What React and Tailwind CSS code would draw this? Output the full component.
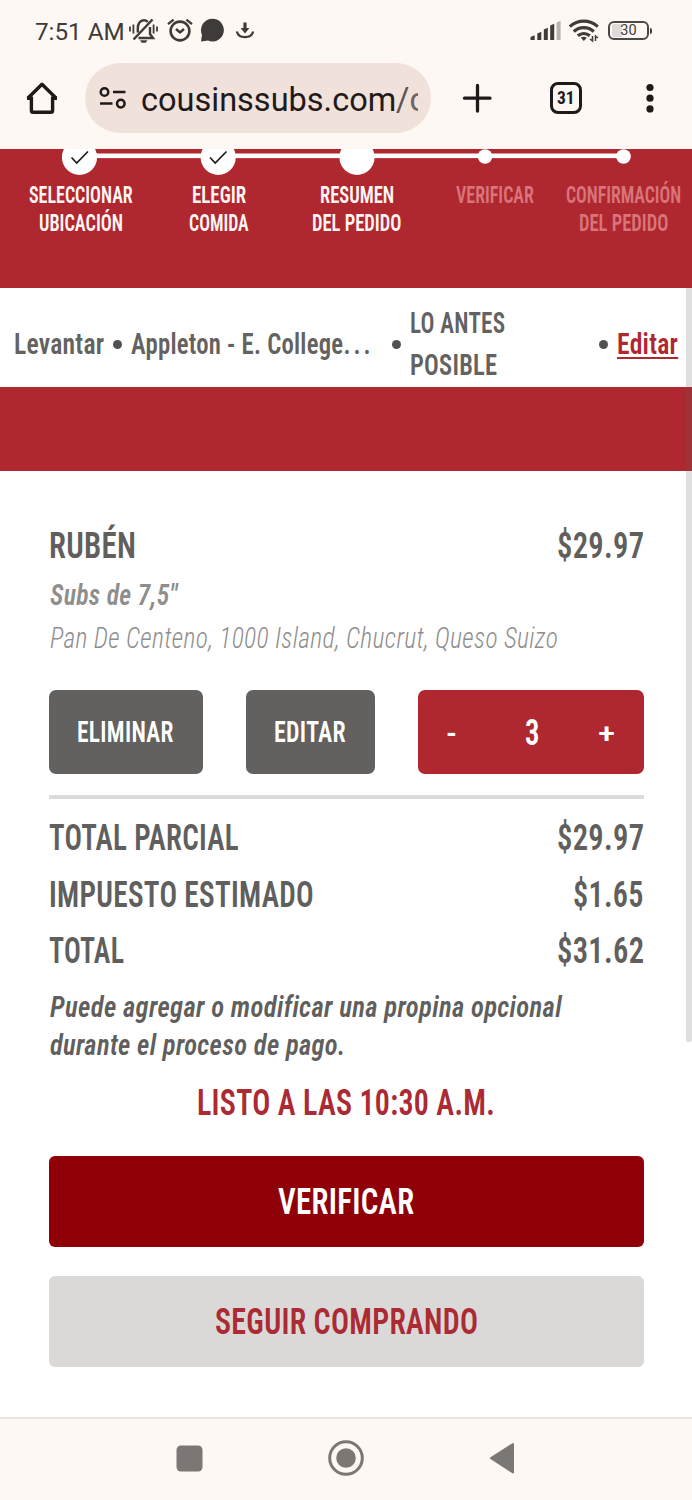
import { useLayoutEffect, useRef, useState } from "react";

/* Single-line text condensed horizontally until it fills its box. */
function Fit({ className = "", inner = "", children }) {
  const box = useRef(null);
  const text = useRef(null);
  const [scale, setScale] = useState(1);
  useLayoutEffect(() => {
    const natural = text.current.offsetWidth;
    if (natural) setScale(box.current.getBoundingClientRect().width / natural);
  }, [children]);
  return (
    <span ref={box} className={`block shrink-0 whitespace-nowrap ${className}`}>
      <span
        ref={text}
        className={`inline-block origin-left ${inner}`}
        style={{ transform: `scaleX(${scale})` }}
      >
        {children}
      </span>
    </span>
  );
}

function StatusBar() {
  return (
    <div className="flex h-[62px] items-start text-[#3f3b3a]">
      <Fit className="ml-[35px] mt-[17px] w-[90px] font-[Roboto] text-[24.500px] leading-[30px]">7:51 AM</Fit>
      <svg className="ml-[3px] mt-[17px] h-[27px] w-[32px]" viewBox="128 17 32 27" fill="none" stroke="currentColor" strokeWidth="2.400">
        <path d="M130 26.500v5M133.400 24.500v9M153.600 24.500v9M157 26.500v5" strokeWidth="1.800" />
        <path d="M137.800 32.500V28c0-4.200 2.400-7.700 6-7.700 1.600 0 3 .5 4 1.500M150 27v7l3 4h-14.500" />
        <path d="M133.500 39.500 152.500 19.500" strokeWidth="2.500" />
        <path d="M140 40.200h7.500l-1.800 2.500h-4z" fill="currentColor" stroke="none" />
      </svg>
      <svg className="ml-[7px] mt-[17px] h-[27px] w-[26px]" viewBox="167 17 26 27" fill="none" stroke="currentColor" strokeWidth="2.600">
        <circle cx="180" cy="31" r="9.400" />
        <path d="M176 29 180 32.400l4-3.400" />
        <path d="M168 24.200 173.600 19.600M186.400 19.600l5.600 4.600" strokeWidth="2.300" />
      </svg>
      <svg className="ml-[7px] mt-[17px] h-[27px] w-[26px]" viewBox="200 17 26 27" fill="currentColor">
        <path d="M212.600 18.700a11.400 11.400 0 1 1-4.600 21.900L201 41.600l1-6.800a11.400 11.400 0 0 1 10.600-16.100z" />
      </svg>
      <svg className="ml-[8px] mt-[17px] h-[27px] w-[22px]" viewBox="234 17 22 27" fill="none" stroke="currentColor" strokeWidth="2.200">
        <path d="M236.800 31.500c2 7.600 14.400 7.600 16.400 0" />
        <path d="M245 22.500v7" strokeWidth="3.200" />
        <path d="M240.600 28h8.800l-4.400 5.500z" fill="currentColor" stroke="none" />
      </svg>
      <svg className="ml-[272px] mt-[17px] h-[27px] w-[36px]" viewBox="528 17 36 27" fill="currentColor">
        <path d="M530.500 37.500q0-1 4.200-2.300V40h-4.200zM537.300 33.500l4-1.700V40h-4zM543.800 29.500l4-1.700V40h-4zM550.200 25.500l4-1.700V40h-4z" />
        <path d="M556.600 22.500l4-1.700V40h-4z" fill="#b9b3b0" />
      </svg>
      <svg className="ml-[3px] mt-[17px] h-[27px] w-[34px]" viewBox="567 17 34 27" fill="none" stroke="currentColor" strokeWidth="3.200">
        <path d="M569.800 26.600c8.200-7.200 19.800-7.200 28 0M573.800 31.500c5.800-5.200 14.200-5.200 20 0M577.800 35.800c3.600-3 8.400-3 12 0" />
        <path d="M580.800 37.800c1.800-1.400 4.200-1.400 6 0l-3 3.200z" fill="currentColor" stroke="none" />
        <path d="M592.500 36v5l-2.500-2M595.500 41v-5l2.500 2" strokeWidth="1.500" />
      </svg>
      <div className="ml-[7px] mt-[21px] flex items-center">
        <div className="flex h-[19px] w-[41px] items-center rounded-[6px] border-2 border-[#4b4746] pl-[2px]">
          <div className="flex h-[13px] w-[33px] items-center justify-center rounded-[2px] bg-[linear-gradient(90deg,#dedad7_30%,transparent_30%)]">
            <span className="font-[Roboto] text-[14.500px] leading-[14px]">30</span>
          </div>
        </div>
        <div className="ml-[1px] h-[6px] w-[2px] rounded-r-[2px] bg-[#3f3b3a]" />
      </div>
    </div>
  );
}

function BrowserBar() {
  return (
    <div className="flex h-[87px] items-start text-[#1f1a19]">
      <svg className="ml-[24px] mt-[17px] h-[38px] w-[36px]" viewBox="24 79 36 38" fill="none" stroke="currentColor" strokeWidth="3.400" strokeLinejoin="round">
        <path d="M27 98.200h4.400v12.300q0 1.800 1.800 1.800h17.600q1.800 0 1.800-1.800V98.200H57" strokeLinejoin="miter" />
        <path d="M27.800 98.200 42 84.200l14.200 14" />
      </svg>
      <div className="ml-[25px] mt-[1px] flex h-[70px] w-[346px] items-center rounded-full bg-[#f0e1db]">
        <svg className="ml-[13px] h-[24px] w-[30px] shrink-0" viewBox="98 86 30 24" fill="none" stroke="currentColor" strokeWidth="2.500">
          <circle cx="104.500" cy="92" r="3.800" />
          <circle cx="120.800" cy="103.600" r="3.800" />
          <path d="M113 92h12.500M100 103.600h12.500" />
        </svg>
        <div className="ml-[13px] mt-[4px] flex w-[277px] overflow-hidden font-[Roboto] text-[32.500px] leading-[44px]">
          <Fit className="w-[255px]">cousinssubs.com</Fit>
          <span className="text-[#5d5350]">/</span>
          <span className="text-[#6f6460]">c</span>
        </div>
      </div>
      <svg className="ml-[31px] mt-[20px] h-[32px] w-[31px]" viewBox="462 82 31 32" fill="none" stroke="currentColor" strokeWidth="3.300" strokeLinecap="round">
        <path d="M477.500 85.500v25.500M464.500 98.200h25.500" />
      </svg>
      <div className="ml-[57px] mt-[20px] flex h-[32px] w-[32px] items-center justify-center rounded-[8px] border-3 border-[#1f1a19]">
        <Fit className="w-[18px] font-['Roboto_Condensed'] text-[17.500px] font-bold leading-[20px]">31</Fit>
      </div>
      <svg className="ml-[63px] mt-[20px] h-[32px] w-[10px]" viewBox="645 82 10 32" fill="currentColor">
        <circle cx="650" cy="87.500" r="3.600" />
        <circle cx="650" cy="98.200" r="3.600" />
        <circle cx="650" cy="108.900" r="3.600" />
      </svg>
    </div>
  );
}

function Step({ lines, col, muted }) {
  return (
    <div className={`flex flex-col items-center ${col} ${muted ? "text-[#d9757a]" : "text-[#fff6f4]"}`}>
      {lines.map(([text, w]) => (
        <Fit key={text} className={w}>{text}</Fit>
      ))}
    </div>
  );
}

function Stepper() {
  return (
    <div className="h-[139px] bg-[#af272f]">
      <svg className="block h-[32px] w-full" viewBox="0 149 692 32" fill="#fff">
        <rect x="79" y="153.500" width="545" height="4.600" />
        <circle cx="79.500" cy="157.300" r="17.600" />
        <circle cx="218.200" cy="157.300" r="17.600" />
        <circle cx="357" cy="157.300" r="17.600" />
        <circle cx="485" cy="156.500" r="7.300" />
        <circle cx="623.500" cy="156.500" r="7.300" />
        <path d="M72 158l4.700 5L87.500 152M210.500 158l4.700 5L226 152" fill="none" stroke="#1d1d1d" strokeWidth="1.700" strokeLinecap="round" />
      </svg>
      <div className="flex pl-[11.500px] font-['Roboto_Condensed'] text-[23.500px] font-semibold leading-[28px]">
        <Step col="w-[138px]" lines={[["SELECCIONAR", "w-[104px]"], ["UBICACIÓN", "w-[84px]"]]} />
        <Step col="w-[138px]" lines={[["ELEGIR", "w-[54px]"], ["COMIDA", "w-[60px]"]]} />
        <Step col="w-[138px]" lines={[["RESUMEN", "w-[74px]"], ["DEL PEDIDO", "w-[89px]"]]} />
        <Step col="w-[138px]" muted lines={[["VERIFICAR", "w-[78px]"]]} />
        <Step col="w-[119px]" muted lines={[["CONFIRMACIÓN", "w-[115px]"], ["DEL PEDIDO", "w-[89px]"]]} />
      </div>
    </div>
  );
}

function Dot({ className = "" }) {
  return <span className={`size-[9px] shrink-0 rounded-full bg-[#525150] ${className}`} />;
}

function OrderBar() {
  return (
    <div className="flex h-[98.500px] items-center bg-white pl-[13.500px] pt-[14px] font-['Roboto_Condensed'] text-[29px] font-semibold leading-[42px] tracking-[0.010em] text-[#636261]">
      <Fit className="w-[90px]">Levantar</Fit>
      <Dot className="ml-[9px]" />
      <Fit className="ml-[9px] w-[242px]">
        Appleton - E. College<span className="tracking-[0.120em]">...</span>
      </Fit>
      <Dot className="ml-[19px]" />
      <div className="ml-[9px] w-[189px]">
        <Fit className="w-[95px]">LO ANTES</Fit>
        <Fit className="w-[87px]">POSIBLE</Fit>
      </div>
      <Dot />
      <Fit className="ml-[9px] w-[61px] text-[#af272f]" inner="underline decoration-[2px] underline-offset-[3px]">Editar</Fit>
    </div>
  );
}

function TotalRow({ label, labelWidth, value, valueWidth }) {
  return (
    <div className="flex h-[56.500px] items-center justify-between">
      <Fit className={labelWidth}>{label}</Fit>
      <Fit className={valueWidth}>{value}</Fit>
    </div>
  );
}

function Order() {
  return (
    <main className="h-[946px] bg-white pl-[48.500px] pr-[48px] pt-[52.500px] font-['Roboto_Condensed'] text-[36.500px] font-semibold leading-[44px] tracking-[0.010em] text-[#605f5e]">
      <div className="flex justify-between">
        <Fit className="w-[87px]">RUBÉN</Fit>
        <Fit className="w-[87px]">$29.97</Fit>
      </div>
      <div className="ml-[1px] mt-[6.500px] text-[29.500px] italic leading-[43px] text-[#8f8e8e]">
        <Fit className="w-[128px]">Subs de 7,5"</Fit>
        <Fit className="w-[508px] font-light">Pan De Centeno, 1000 Island, Chucrut, Queso Suizo</Fit>
      </div>
      <div className="mt-[30px] flex h-[84px] text-[29.500px] text-white">
        <button className="flex w-[154px] items-center justify-center rounded-[7px] bg-[#63615f]">
          <Fit className="w-[97px]">ELIMINAR</Fit>
        </button>
        <button className="ml-[43.500px] flex w-[128.500px] items-center justify-center rounded-[7px] bg-[#63615f]">
          <Fit className="w-[72px]">EDITAR</Fit>
        </button>
        <div className="ml-[43.500px] flex flex-1 items-center justify-between rounded-[7px] bg-[#af272f] pl-[28px] pr-[29px]">
          <Fit className="mt-[2px] w-[11px]">-</Fit>
          <Fit className="ml-[9px] mt-[1px] w-[15px] text-[36.500px]">3</Fit>
          <Fit className="mt-[3px] w-[17px] text-[27px] font-medium">+</Fit>
        </div>
      </div>
      <div className="mt-[21px] h-[4px] bg-[#dbdbdb]" />
      <div className="mt-[11px]">
        <TotalRow label="TOTAL PARCIAL" labelWidth="w-[190px]" value="$29.97" valueWidth="w-[87px]" />
        <TotalRow label="IMPUESTO ESTIMADO" labelWidth="w-[265px]" value="$1.65" valueWidth="w-[71px]" />
        <TotalRow label="TOTAL" labelWidth="w-[75px]" value="$31.62" valueWidth="w-[87px]" />
      </div>
      <div className="ml-[1px] mt-[8px] text-[29px] italic leading-[38px]">
        <Fit className="w-[512px]">Puede agregar o modificar una propina opcional</Fit>
        <Fit className="w-[296px]">durante el proceso de pago.</Fit>
      </div>
      <div className="mt-[17.500px] flex justify-center text-[#ab2a34]">
        <Fit className="w-[298px]">LISTO A LAS 10:30 A.M.</Fit>
      </div>
      <button className="mt-[31px] flex h-[91px] w-full items-center justify-center rounded-[6px] bg-[#8f0008] pt-px text-white">
        <Fit className="w-[136px]">VERIFICAR</Fit>
      </button>
      <button className="mt-[28.500px] flex h-[91.500px] w-full items-center justify-center rounded-[6px] bg-[#dbd9d8] pt-px text-[#ab2a34]">
        <Fit className="w-[263px]">SEGUIR COMPRANDO</Fit>
      </button>
    </main>
  );
}

function NavBar() {
  return (
    <div className="flex h-[83px] border-t-2 border-[#ece5dd] bg-[#fef8f4] text-[#7b7774]">
      <svg className="ml-[176px] mt-[26px] size-[27px]" viewBox="0 0 27 27" fill="currentColor">
        <rect x=".5" y=".5" width="26" height="26" rx="4.500" />
      </svg>
      <svg className="ml-[124px] mt-[20px] size-[38px]" viewBox="0 0 38 38" fill="none" stroke="currentColor">
        <circle cx="19" cy="19" r="16.300" strokeWidth="3" />
        <circle cx="19" cy="19" r="9.800" fill="currentColor" stroke="none" />
      </svg>
      <svg className="ml-[124px] mt-[23px] h-[32px] w-[26px]" viewBox="489 1442 26 32" fill="currentColor" stroke="currentColor" strokeWidth="2" strokeLinejoin="round">
        <path d="M491 1458.200 513 1444v28.500z" />
      </svg>
    </div>
  );
}

export default function App() {
  return (
    <div className="relative flex h-[1500px] w-[692px] flex-col overflow-hidden bg-[#fef8f4]">
      <StatusBar />
      <BrowserBar />
      <Stepper />
      <OrderBar />
      <div className="h-[84.500px] shrink-0 bg-[#af272f]" />
      <Order />
      <NavBar />
      <div className="absolute right-0 top-[288px] h-[754px] w-[6px] rounded-b-[2px] bg-[#606060]/20" />
    </div>
  );
}
